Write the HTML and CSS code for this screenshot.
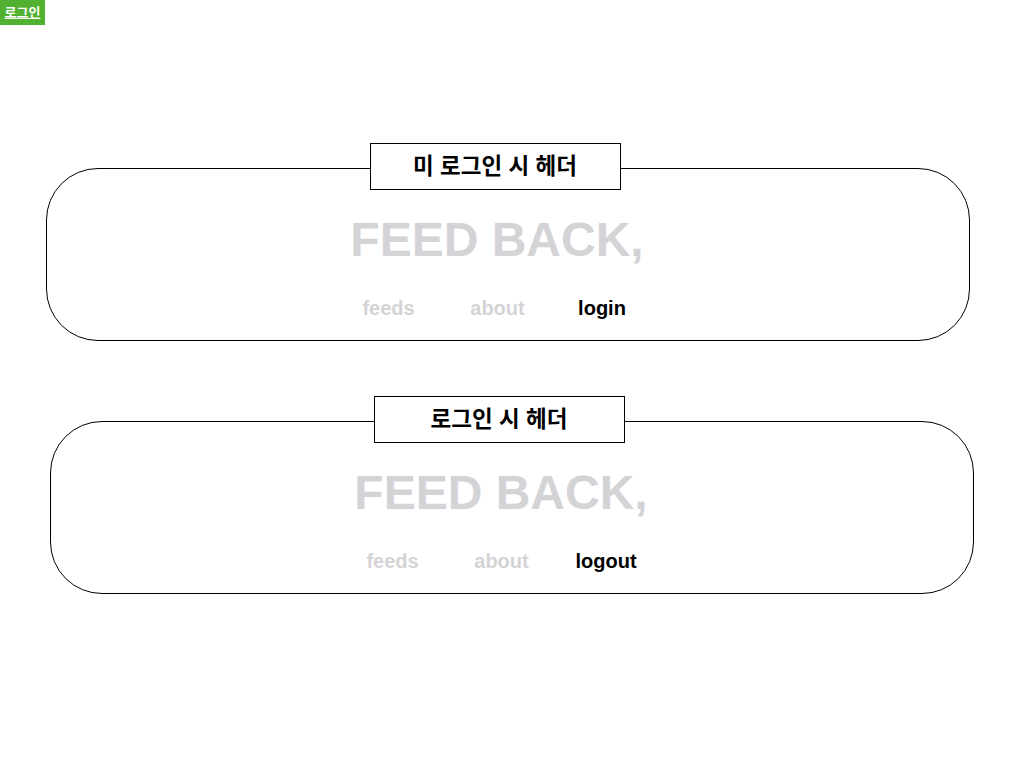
FILE: index.html
```html
<!DOCTYPE html>
<html lang="ko">
<head>
  <meta charset="UTF-8">
  <title>FEED BACK header</title>
  <link rel="stylesheet" href="styles.css">
</head>
<body>
<a class="login-btn" href="#">로그인</a>

<div class="header-box first">
  <div class="label">미 로그인 시 헤더</div>
  <h1 class="logo">FEED BACK,</h1>
  <ul class="nav">
    <li class="off">feeds</li>
    <li class="off">about</li>
    <li class="on">login</li>
  </ul>
</div>

<div class="header-box second">
  <div class="label">로그인 시 헤더</div>
  <h1 class="logo">FEED BACK,</h1>
  <ul class="nav">
    <li class="off">feeds</li>
    <li class="off">about</li>
    <li class="on">logout</li>
  </ul>
</div>
</body>
</html>
```

FILE: styles.css
```css
* {
  padding: 0;
  margin: 0;
  list-style: none;
  box-sizing: border-box;
}

body {
  background: #fff;
  font-family: "Liberation Sans", Arial, "Noto Sans CJK KR", sans-serif;
  color: #000;
}

.login-btn {
  display: block;
  width: 45px;
  height: 25px;
  background: #53b132;
  color: #fff;
  font-family: "Noto Sans CJK KR", sans-serif;
  font-size: 13px;
  font-weight: bold;
  line-height: 23px;
  text-align: center;
  text-decoration: underline;
}

.header-box {
  width: 924px;
  height: 173px;
  border: 1px solid #000;
  border-radius: 52px;
  padding-right: 26px;
  display: flex;
  flex-direction: column;
  align-items: center;
}

.header-box.first {
  margin: 143px 0 0 46px;
}

.header-box.second {
  margin: 80px 0 0 50px;
}

.label {
  width: 251px;
  height: 47px;
  margin-top: -26px;
  border: 1px solid #000;
  background: #fff;
  font-family: "Noto Sans CJK KR", sans-serif;
  font-size: 22.5px;
  font-weight: bold;
  line-height: 40px;
  text-align: center;
}

.logo {
  margin-top: 26px;
  margin-left: 4px;
  font-size: 48px;
  line-height: 48px;
  font-weight: bold;
  color: #d4d3d5;
}

.nav {
  display: flex;
  margin-top: 34px;
  margin-right: 4px;
  font-size: 20px;
  line-height: 20px;
  font-weight: bold;
}

.nav li {
  width: 109px;
  text-align: center;
}

.nav li:last-child {
  width: 100px;
}

.nav .off {
  color: #d4d3d5;
}

.nav .on {
  color: #000;
}
```
